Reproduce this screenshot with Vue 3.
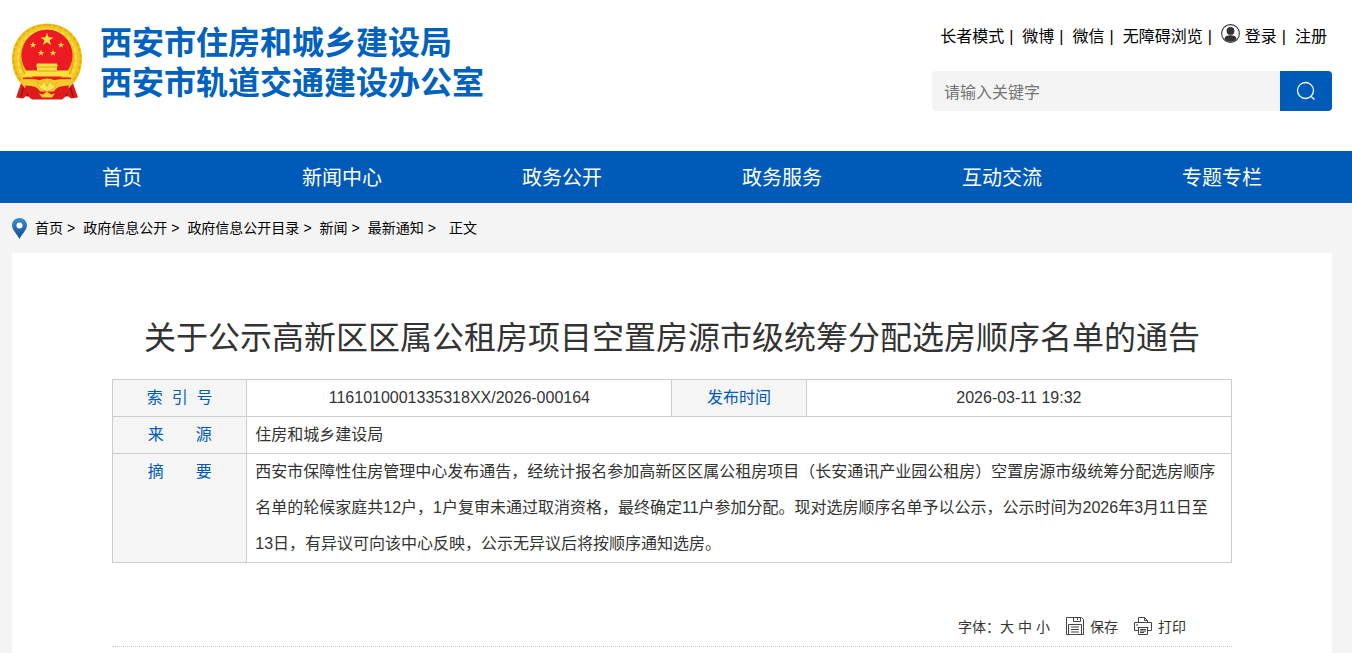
<script setup>
import { ref } from 'vue'

const keyword = ref('')
const links = ['长者模式', '微博', '微信', '无障碍浏览']
const nav = ['首页', '新闻中心', '政务公开', '政务服务', '互动交流', '专题专栏']
const crumbs = ['首页', '政府信息公开', '政府信息公开目录', '新闻', '最新通知']
const star = '0,-10 2.4,-3.2 9.5,-3.1 3.8,1.2 5.9,8.1 0,4 -5.9,8.1 -3.8,1.2 -9.5,-3.1 -2.4,-3.2'
</script>

<template>
  <div class="page">
    <header class="header wrap">
      <a class="brand" href="#">
        <svg class="emblem" viewBox="1 1 70 77" aria-hidden="true">
          <path d="M11 58h50l6 17-7 1-4-3-5 4H21l-5-4-4 3-7-1z" fill="#dc1c1c" />
          <path d="M13 63l-3 11M18 65l-2 9M59 63l3 11M54 65l2 9" stroke="#99120f" stroke-width="1.5" />
          <path d="M36 1C16 1 1 16 1 36c0 12 4 21 11 27l10 4h28l10-4c7-6 11-15 11-27C71 16 56 1 36 1z" fill="#f3c71f" />
          <path d="M36 2.500C17 2.500 2.500 17 2.500 36c0 11 4 19 10 25M36 2.500C55 2.500 69.500 17 69.500 36c0 11-4 19-10 25" fill="none" stroke="#dba818" stroke-width="1.5" stroke-dasharray="4 2" />
          <path d="M36 7C19 7 7 19 7 36c0 10 4 18 10 23M36 7c17 0 29 12 29 29 0 10-4 18-10 23" fill="none" stroke="#fbdf4e" stroke-width="2" stroke-dasharray="5 2" />
          <path d="M36 9.500C21 9.500 10 21 10 36c0 9 3 16 8 20M36 9.500C51 9.500 62 21 62 36c0 9-3 16-8 20" fill="none" stroke="#d99c14" stroke-width="1" />
          <ellipse cx="36" cy="33" rx="25.500" ry="26" fill="#ec1b23" />
          <g fill="#fce03b">
            <polygon :points="star" transform="translate(36 17) scale(.68)" />
            <polygon :points="star" transform="translate(22 22.500) scale(.34)" />
            <polygon :points="star" transform="translate(50 22.500) scale(.34)" />
            <polygon :points="star" transform="translate(30 30.500) scale(.34)" />
            <polygon :points="star" transform="translate(42 30.500) scale(.34)" />
            <path d="M26 41h20l1 3h-1v4h11l2 6H13l2-6h11v-4h-1z" />
          </g>
          <path d="M26 44.500h20M25 48.500h22" stroke="#e0a01c" stroke-width="1" />
          <path d="M12 55h48v2H12z" fill="#ec1b23" />
          <path d="M10 57q12-1 18 1 8-4 16 0 6-2 18-1l-3 8-13 2q-10 8-20 0l-13-2z" fill="#f6cb28" />
          <path d="M14 63q13 0 15 6h14q2-6 15-6l-2 8q-10-2-12 4H28q-2-6-12-4z" fill="#e01b1d" />
          <path d="M26 59l4 4 3-5 3 6 3-6 3 5 4-4-3 7-7 3-7-3z" fill="#ffe253" stroke="#d99713" stroke-width=".6" />
          <path d="M28 71l4 1 4-3 4 3 4-1-3 4H31z" fill="#f8ce2b" />
        </svg>
        <span class="brand-name">西安市住房和城乡建设局<br>西安市轨道交通建设办公室</span>
      </a>
      <div class="tools">
        <div class="links">
          <template v-for="item in links" :key="item">
            <a href="#">{{ item }}</a><span class="bar">|</span>
          </template>
          <svg class="user" viewBox="0 0 18 18" aria-hidden="true">
            <circle cx="9" cy="9" r="8.400" fill="#fff" stroke="#333" stroke-width="1" />
            <circle cx="9" cy="6.600" r="3.700" fill="#333" />
            <path d="M3.300 14.500c0-3 3-3.800 5.700-3.800s5.700.8 5.700 3.800c-3 3.200-8.400 3.200-11.400 0z" fill="#333" />
          </svg>
          <a href="#">登录</a><span class="bar">|</span><a href="#">注册</a>
        </div>
        <form class="search" @submit.prevent>
          <input v-model="keyword" type="text" placeholder="请输入关键字" aria-label="请输入关键字">
          <button type="submit" aria-label="搜索">
            <svg viewBox="0 0 20 20" aria-hidden="true">
              <circle cx="9.500" cy="9.500" r="8" />
              <path d="M14.500 15l4 3.500" />
            </svg>
          </button>
        </form>
      </div>
    </header>

    <nav class="nav">
      <div class="nav-inner wrap">
        <a v-for="item in nav" :key="item" href="#">{{ item }}</a>
      </div>
    </nav>

    <div class="crumbs wrap">
      <svg class="pin" viewBox="0 0 15 21" aria-hidden="true">
        <defs>
          <linearGradient id="pinFill" x1="0" y1="0" x2="0" y2="1">
            <stop offset="0" stop-color="#3f8ed0" />
            <stop offset="1" stop-color="#0a4c95" />
          </linearGradient>
        </defs>
        <path d="M7.500 0C3.300 0 0 3.200 0 7.300 0 12 5 16 7.500 21 10 16 15 12 15 7.300 15 3.200 11.700 0 7.500 0z" fill="url(#pinFill)" />
        <circle cx="7.500" cy="7.500" r="3" fill="#fff" />
      </svg>
      <div class="trail">
        <template v-for="item in crumbs" :key="item">
          <a href="#">{{ item }}</a><span class="arrow">&gt;</span>
        </template>
        <span class="current">正文</span>
      </div>
    </div>

    <main class="main">
      <h1>关于公示高新区区属公租房项目空置房源市级统筹分配选房顺序名单的通告</h1>
      <table>
        <colgroup>
          <col class="c-label"><col class="c-value"><col class="c-label"><col class="c-value">
        </colgroup>
        <tbody>
          <tr>
            <th scope="row">索&nbsp;&nbsp;引&nbsp;&nbsp;号</th>
            <td class="center">1161010001335318XX/2026-000164</td>
            <th scope="row">发布时间</th>
            <td class="center">2026-03-11 19:32</td>
          </tr>
          <tr>
            <th scope="row">来&emsp;&emsp;源</th>
            <td colspan="3">住房和城乡建设局</td>
          </tr>
          <tr>
            <th scope="row">摘&emsp;&emsp;要</th>
            <td colspan="3">西安市保障性住房管理中心发布通告，经统计报名参加高新区区属公租房项目（长安通讯产业园公租房）空置房源市级统筹分配选房顺序名单的轮候家庭共12户，1户复审未通过取消资格，最终确定11户参加分配。现对选房顺序名单予以公示，公示时间为2026年3月11日至13日，有异议可向该中心反映，公示无异议后将按顺序通知选房。</td>
          </tr>
        </tbody>
      </table>
      <div class="actions">
        <div class="sizes">
          <span>字体：</span>
          <button type="button">大</button>
          <button type="button">中</button>
          <button type="button">小</button>
        </div>
        <button type="button">
          <svg viewBox="0 0 18 18" aria-hidden="true">
            <path d="M.5.5h15l2 2v15H.5zM7.500.5v4h7v-4M11.500 1v2M2.500 17.500v-10h13v10M5 10h8M5 12.500h8M5 15h8" />
          </svg>
          保存
        </button>
        <button type="button">
          <svg viewBox="0 0 18 18" aria-hidden="true">
            <path d="M4.500 5.500v-5h6l3 3v2M10.500.5v3h3M4 13.500H.5v-8h17v8H14M2 8h2M3.500 10.500h11M4.500 10.500v7h9v-7M6 12.500h6M6 14h6M6 15.500h4" />
          </svg>
          打印
        </button>
      </div>
    </main>
  </div>
</template>

<style>
body {
  margin: 0;
  background: #f4f4f4;
}
</style>

<style scoped>
.page {
  min-height: 100vh;
  display: flex;
  flex-direction: column;
  font-family: "Liberation Sans", "Noto Sans CJK SC", sans-serif;
  font-size: 16px;
  color: #333;
}
* {
  box-sizing: border-box;
}
a {
  color: inherit;
  text-decoration: none;
}
button {
  border: 0;
  padding: 0;
  background: none;
  font: inherit;
  color: inherit;
  cursor: pointer;
}
.wrap {
  padding: 0 20px 0 12px;
}
.header {
  display: flex;
  justify-content: space-between;
  align-items: flex-start;
  padding-top: 23px;
  padding-bottom: 40px;
  background: #fff;
}
.brand {
  display: flex;
  gap: 18px;
}
.emblem {
  width: 70px;
  height: 78px;
}
.brand-name {
  font-size: 32px;
  font-weight: 700;
  line-height: 40px;
  color: #0061bf;
}
.tools {
  width: 400px;
}
.links {
  display: flex;
  justify-content: flex-end;
  align-items: baseline;
  height: 28px;
  margin-bottom: 20px;
  padding-right: 5px;
  line-height: 28px;
  color: #000;
  white-space: nowrap;
}
.bar {
  margin: 0 9px 0 5px;
}
.user {
  align-self: flex-start;
  width: 19px;
  height: 19px;
  margin: 1px 5px 0 0;
}
.search {
  display: flex;
  height: 40px;
  border-radius: 4px;
  overflow: hidden;
}
.search input {
  flex: 1;
  min-width: 0;
  border: 0;
  outline: 0;
  padding: 4px 12px 0;
  background: #f4f4f4;
  font: inherit;
}
.search input::placeholder {
  color: #757575;
}
.search button {
  width: 52px;
  display: grid;
  place-items: center;
  background: #005ab8;
}
.search svg {
  width: 20px;
  height: 20px;
  fill: none;
  stroke: #fff;
  stroke-width: 1.3;
}
.nav {
  background: #005ab8;
}
.nav-inner {
  display: grid;
  grid-template-columns: repeat(6, 1fr);
}
.nav a {
  padding-top: 2px;
  font-size: 20px;
  line-height: 50px;
  text-align: center;
  color: #fff;
}
.crumbs {
  display: flex;
  align-items: center;
  height: 50px;
  font-size: 14px;
  color: #000;
}
.pin {
  width: 15px;
  height: 21px;
  margin-right: 8px;
}
.trail {
  display: flex;
  align-items: baseline;
  line-height: 20px;
}
.arrow {
  margin: 0 8px 0 4px;
}
.current {
  margin-left: 5px;
}
.main {
  flex: 1;
  margin: 0 20px 0 12px;
  padding: 60px 100px 0;
  background: #fff;
}
h1 {
  margin: 0 0 16px;
  font-size: 32px;
  font-weight: 400;
  line-height: 50px;
  text-align: center;
}
table {
  width: 100%;
  border-collapse: collapse;
  table-layout: fixed;
  line-height: 36px;
}
.c-label {
  width: 12%;
}
.c-value {
  width: 38%;
}
th,
td {
  border: 1px solid #ccc;
  padding: 0 8px;
  vertical-align: top;
}
th {
  font-weight: 400;
  color: #005ab8;
  background: #f5f5f5;
}
.center {
  text-align: center;
}
.actions {
  display: flex;
  justify-content: flex-end;
  align-items: center;
  gap: 16px;
  height: 42px;
  margin-top: 42px;
  padding-right: 46px;
  border-bottom: 1px dotted #ccc;
  font-size: 14px;
}
.sizes {
  display: flex;
  gap: 4px;
}
.sizes span {
  margin-right: -4px;
}
.actions > button {
  display: flex;
  align-items: center;
  gap: 6px;
}
.actions svg {
  width: 18px;
  height: 18px;
  fill: none;
  stroke: #444;
  stroke-width: 1;
}
</style>
